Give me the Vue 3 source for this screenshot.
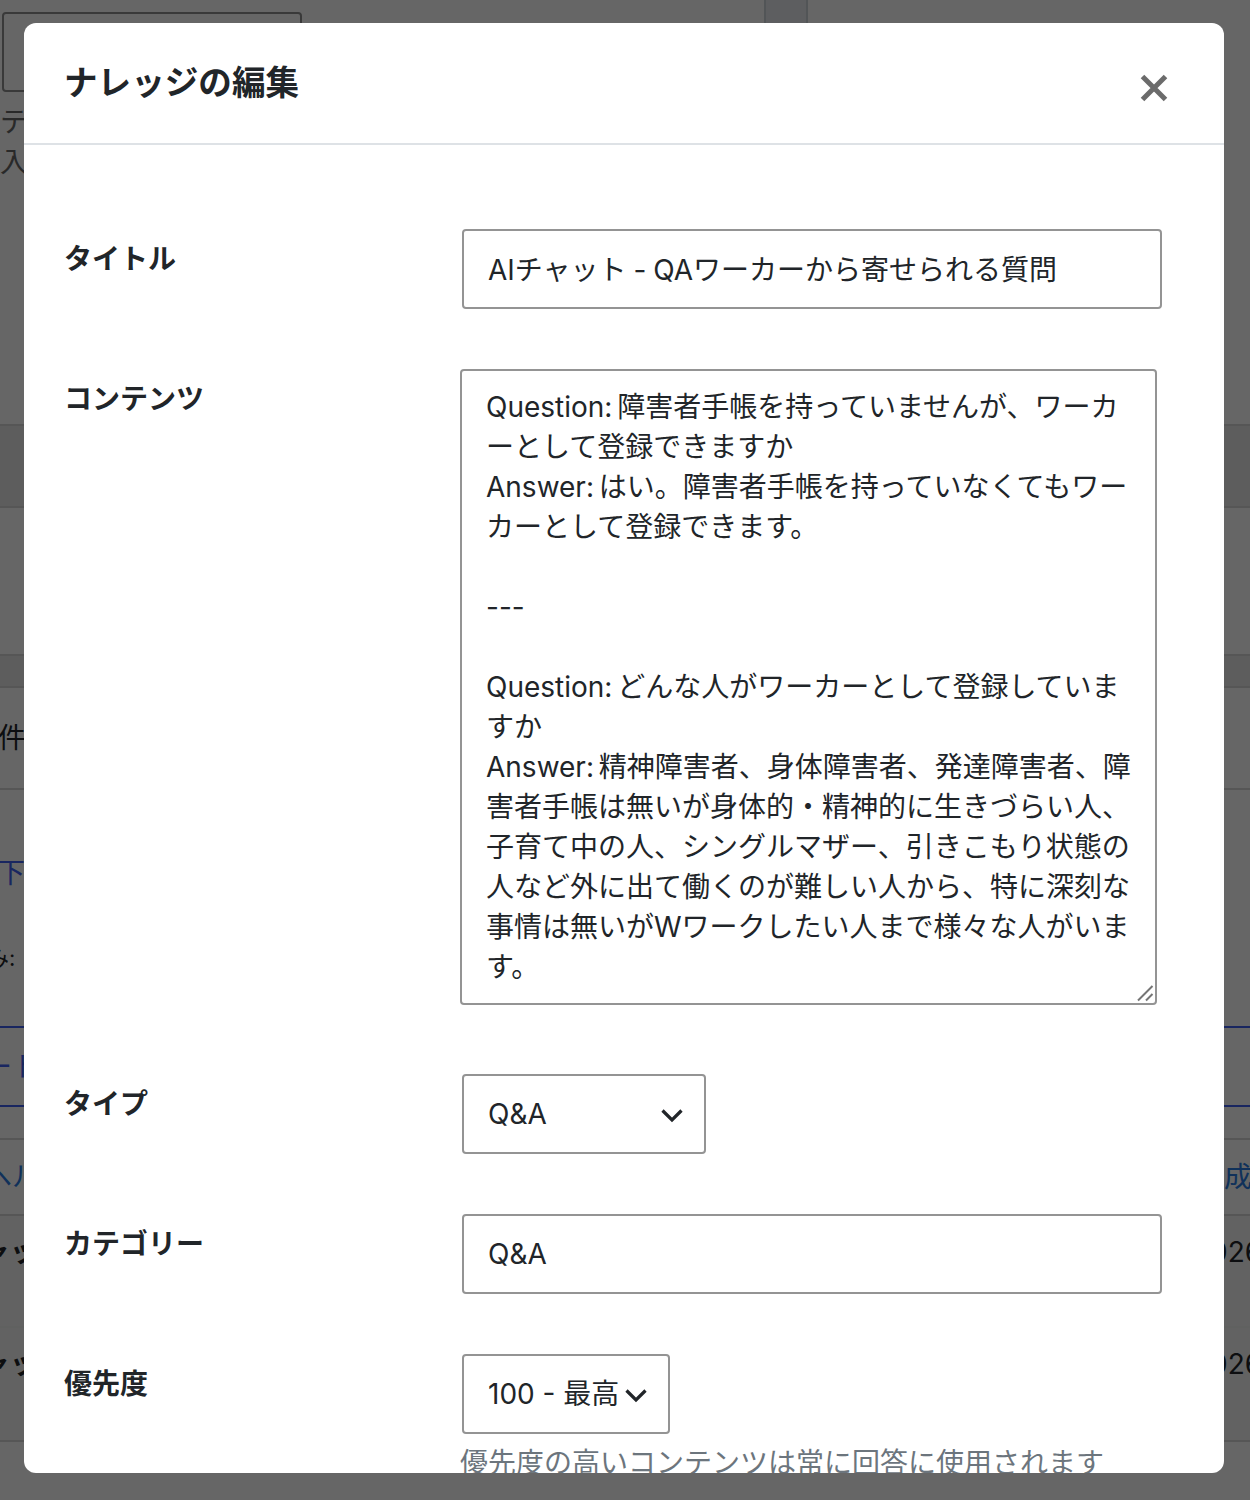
<script setup>
const content = `Question: 障害者手帳を持っていませんが、ワーカ
ーとして登録できますか
Answer: はい。障害者手帳を持っていなくてもワー
カーとして登録できます。

---

Question: どんな人がワーカーとして登録していま
すか
Answer: 精神障害者、身体障害者、発達障害者、障
害者手帳は無いが身体的・精神的に生きづらい人、
子育て中の人、シングルマザー、引きこもり状態の
人など外に出て働くのが難しい人から、特に深刻な
事情は無いがWワークしたい人まで様々な人がいま
す。`
</script>

<template>
  <div class="page">
    <div class="back">
      <section class="hero">
        <div class="top-line">
          <div class="fake-input"></div>
          <div class="band"></div>
        </div>
        <p class="hint">テキスト</p>
        <p class="hint">入力</p>
      </section>
      <div class="row shade r82"></div>
      <div class="row r148"></div>
      <div class="row shade r32"></div>
      <div class="row r102"><span class="count">件</span></div>
      <section class="links">
        <p class="link-a">下</p>
        <p class="small">み:</p>
        <div class="tab"><span>ート</span></div>
      </section>
      <div class="row r76 head"><span class="cut-l blue">ヘル</span><span class="cut-r blue">作成</span></div>
      <div class="row r112 item"><span class="cut-i">チャット</span><span class="date">2026-01-01</span></div>
      <div class="row r114 item faint"><span class="cut-i">チャット</span><span class="date">2026-01-01</span></div>
      <div class="row r42"></div>
    </div>

    <div class="overlay">
      <div class="modal">
        <header class="modal-head">
          <h2>ナレッジの編集</h2>
          <button class="close" aria-label="閉じる">
            <svg width="28" height="28" viewBox="0 0 28 28"><path d="M2.5 2.5 25.5 25.5M25.5 2.5 2.5 25.5" stroke="#6b6b6b" stroke-width="5" fill="none"/></svg>
          </button>
        </header>
        <form class="modal-body" @submit.prevent>
          <div class="field">
            <label>タイトル</label>
            <input class="control wide title-input" value="AIチャット - QAワーカーから寄せられる質問" />
          </div>
          <div class="field">
            <label>コンテンツ</label>
            <div class="area-wrap">
              <textarea class="control area" wrap="off" :value="content"></textarea>
              <svg class="grip" width="18" height="18" viewBox="0 0 18 18"><path d="M1 15.5 15.5 1M9 15.5 15.5 9" stroke="#757575" stroke-width="2" fill="none"/></svg>
            </div>
          </div>
          <div class="field">
            <label>タイプ</label>
            <div class="select-wrap type">
              <select class="control"><option>Q&amp;A</option></select>
              <svg class="chev" width="24" height="16" viewBox="0 0 24 16"><path d="M2.5 3.5 12 13 21.5 3.5" stroke="#212529" stroke-width="3.2" fill="none"/></svg>
            </div>
          </div>
          <div class="field">
            <label>カテゴリー</label>
            <input class="control wide" value="Q&A" />
          </div>
          <div class="field last">
            <label>優先度</label>
            <div class="col">
              <div class="select-wrap prio">
                <select class="control"><option>100 - 最高</option></select>
                <svg class="chev" width="24" height="16" viewBox="0 0 24 16"><path d="M2.5 3.5 12 13 21.5 3.5" stroke="#212529" stroke-width="3.2" fill="none"/></svg>
              </div>
              <p class="help">優先度の高いコンテンツは常に回答に使用されます</p>
            </div>
          </div>
        </form>
      </div>
    </div>
  </div>
</template>

<style>
html, body { margin: 0; padding: 0; }
</style>

<style scoped>
* { box-sizing: border-box; }
.page {
  position: relative;
  width: 1250px;
  height: 1500px;
  overflow: hidden;
  background: #fff;
  color: #212529;
  font-family: Inter, "Noto Sans CJK JP", sans-serif;
  font-size: 28px;
  line-height: 40px;
}
.back { display: flex; flex-direction: column; width: 1250px; }
.hero { height: 424px; overflow: hidden; }
.top-line { display: flex; height: 92px; position: relative; }
.fake-input { width: 300px; height: 80px; margin: 12px 0 0 2px; border: 2px solid #8f8f8f; border-radius: 4px; }
.band { width: 44px; height: 30px; margin-left: 462px; background: #e9ecef; border: solid #ced4da; border-width: 0 2px; }
.hint { margin: 10px 0 0; height: 30px; color: #666; }
.row { display: flex; justify-content: space-between; align-items: center; overflow: hidden; border-top: 2px solid #d8d8d8; }
.shade { background: #e8e8e8; }
.r82 { height: 82px; }
.r148 { height: 148px; }
.r32 { height: 32px; }
.r102 { height: 102px; }
.r76 { height: 76px; }
.r112 { height: 112px; }
.r114 { height: 114px; }
.r42 { height: 42px; }
.count { margin-left: -2px; }
.links { height: 350px; border-top: 2px solid #d8d8d8; overflow: hidden; }
.link-a { margin: 63px 0 0 -3px; height: 40px; color: #4060f0; }
.small { margin: 45px 0 0 -13px; height: 40px; font-size: 22px; }
.tab { margin-top: 48px; height: 81px; border: solid #4060f0; border-width: 2px 0; display: flex; align-items: center; color: #4060f0; }
.tab span { margin-left: -16px; }
.cut-l { margin-left: -16px; }
.cut-r { margin-right: -2px; }
.blue { color: #2a7ae0; }
.head { background: #fff; }
.item { background: #f4f6f5; align-items: flex-start; padding-top: 16px; }
.faint { border-top-color: #f0f2f1; }
.cut-i { margin-left: -46px; font-weight: 700; }
.date { margin-right: -96px; }

.overlay {
  position: absolute;
  inset: 0;
  background: rgba(0, 0, 0, 0.6);
  padding: 23px 26px 27px 24px;
}
.modal {
  height: 1450px;
  background: #fff;
  border-radius: 12px;
  overflow: hidden;
}
.modal-head {
  height: 122px;
  border-bottom: 2px solid #dee2e6;
  display: flex;
  justify-content: space-between;
  padding: 0 56px 0 40px;
}
.modal-head h2 {
  margin: 37px 0 0;
  font-size: 33.6px;
  line-height: 46px;
  font-weight: 700;
}
.close {
  width: 28px;
  height: 28px;
  margin-top: 51px;
  padding: 0;
  border: 0;
  background: none;
  display: flex;
}
.modal-body {
  display: flex;
  flex-direction: column;
  gap: 60px;
  padding: 84px 62px 0 40px;
}
.field { display: flex; }
.field label {
  flex: 0 0 398px;
  font-weight: 700;
  line-height: 40px;
  margin-top: 10px;
}
.control {
  height: 80px;
  padding: 0 24px;
  border: 2px solid #949494;
  border-radius: 4px;
  background: #fff;
  color: #212529;
  font: inherit;
  outline: none;
}
.wide { width: 700px; }
.title-input { word-spacing: -1px; padding-bottom: 2px; }
.area-wrap {
  position: relative;
  width: 697px;
  height: 636px;
  margin: 0 0 9px -2px;
}
.area {
  display: block;
  width: 697px;
  height: 636px;
  padding: 16px 24px;
  white-space: pre;
  word-spacing: -3px;
  overflow: hidden;
  resize: none;
  line-height: 40px;
}
.grip { position: absolute; right: 2px; bottom: 2px; }
.select-wrap { position: relative; }
.select-wrap select { width: 100%; appearance: none; -webkit-appearance: none; }
.type { width: 244px; }
.prio { width: 208px; }
.chev { position: absolute; right: 22px; top: 33px; }
.col { display: flex; flex-direction: column; }
.help { margin: 9px 0 0 -2px; color: #6c757d; white-space: nowrap; }
</style>
